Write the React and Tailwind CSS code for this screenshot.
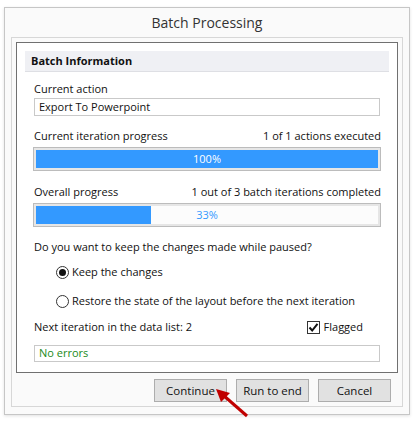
import React from "react";

function ProgressBar({ value, label, full }) {
	return (
		<div className="h-[24px] border border-[#bcbcbc] bg-[#e6e6e6] p-[2px]">
			<div className="relative h-full bg-[#fcfcfc]">
				<div className="h-full bg-[#3399ff]" style={{ width: `${value}%` }}></div>
				<div className={`absolute inset-0 flex items-center justify-center text-[11px] ${full ? "text-white" : "text-[#3399ff]"}`}>
					{label}
				</div>
			</div>
		</div>
	);
}

function Radio({ checked, children }) {
	return (
		<div className="flex items-center h-[16px] pl-[23px]">
			<div className="w-[13px] h-[13px] rounded-full border border-[#333] bg-white flex items-center justify-center">
				{checked && <div className="w-[7px] h-[7px] rounded-full bg-[#111]"></div>}
			</div>
			<span className="ml-[3px]">{children}</span>
		</div>
	);
}

function Button({ children }) {
	return (
		<button className="w-[73px] h-[23px] border border-[#adadad] bg-[#e1e1e1] text-[11.5px] text-[#111] flex items-center justify-center">
			{children}
		</button>
	);
}

export default function App() {
	return (
		<div className="relative w-[420px] h-[430px] bg-white pt-[7px] pl-[4px]" style={{ fontFamily: '"Open Sans", "Noto Sans", sans-serif' }}>
			<div className="w-[406px] h-[408px] border border-[#c6c6c6] bg-[#fafafa] shadow-[0_1px_3px_rgba(0,0,0,0.12)] flex flex-col">
				<div className="h-[29px] flex items-center justify-center text-[14px] text-[#333]">Batch Processing</div>
				<div className="mx-[6px] h-[370px] border border-[#d7d7d7] p-[4px] flex flex-col">
					<div className="h-[331px] border border-[#707070] bg-white px-[8px] pt-[8px] text-[11px] text-[#111]">
						<div className="h-[21px] bg-[#eff0f4] border-b border-[#dedfe4] flex items-center pl-[6px] font-bold">Batch Information</div>
						<div className="px-[8px]">
							<div className="mt-[9px] h-[16px] flex items-center pl-[1px]">Current action</div>
							<div className="mt-[1px] h-[18px] border border-[#c9c9c9] flex items-center pl-[4px] mr-[1px] ml-[1px]">Export To Powerpoint</div>
							<div className="mt-[12px] h-[16px] flex items-center justify-between pl-[1px]">
								<span>Current iteration progress</span>
								<span>1 of 1 actions executed</span>
							</div>
							<div className="mt-[3px]">
								<ProgressBar value={100} label="100%" full />
							</div>
							<div className="mt-[13px] h-[16px] flex items-center justify-between pl-[1px]">
								<span>Overall progress</span>
								<span>1 out of 3 batch iterations completed</span>
							</div>
							<div className="mt-[3px]">
								<ProgressBar value={33.5} label="33%" />
							</div>
							<div className="mt-[12px] h-[16px] flex items-center pl-[1px]">Do you want to keep the changes made while paused?</div>
							<div className="mt-[9px]">
								<Radio checked>Keep the changes</Radio>
							</div>
							<div className="mt-[13px]">
								<Radio>Restore the state of the layout before the next iteration</Radio>
							</div>
							<div className="mt-[10px] h-[16px] flex items-center justify-between pl-[1px]">
								<span>Next iteration in the data list: 2</span>
								<div className="flex items-center mr-[18px]">
									<div className="w-[13px] h-[13px] border border-[#333] bg-white flex items-center justify-center">
										<svg width="11" height="11" viewBox="0 0 11 11">
											<path d="M1.5 5.5 L4.2 8.5 L9.5 1.8" stroke="#111" strokeWidth="2" fill="none" />
										</svg>
									</div>
									<span className="ml-[4px]">Flagged</span>
								</div>
							</div>
							<div className="mt-[10px] h-[17px] border border-[#c9c9c9] flex items-center pl-[4px] text-[#1a8a1a] ml-[1px] mr-[1px]">No errors</div>
						</div>
					</div>
					<div className="flex justify-end gap-[9px] mt-[6px] pr-[7px]">
						<Button>Continue</Button>
						<Button>Run to end</Button>
						<Button>Cancel</Button>
					</div>
				</div>
			</div>
			<svg className="absolute left-[210px] top-[384px]" width="44" height="38" viewBox="0 0 44 38">
				<path d="M37 32 L13 11" stroke="#c00000" strokeWidth="3" fill="none" />
				<path d="M6 5 L20 9 L11 18 Z" fill="#c00000" />
			</svg>
		</div>
	);
}
